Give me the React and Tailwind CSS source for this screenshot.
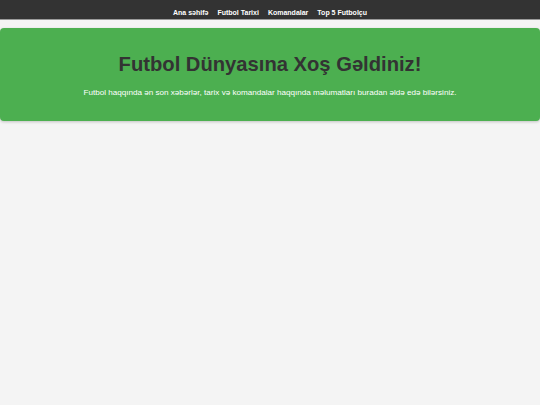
export default function App() {
  const links = ['Ana səhifə', 'Futbol Tarixi', 'Komandalar', 'Top 5 Futbolçu'];

  return (
    <div className="min-h-screen bg-[#f4f4f4]" style={{ fontFamily: '"Liberation Sans", Arial, sans-serif' }}>
      {/* Naviqasiya */}
      <nav className="h-[20px] bg-[#333333] border-b border-[#9a9a9a] flex items-center justify-center">
        <ul className="flex items-center gap-[9px] leading-none">
          {links.map((l) => (
            <li key={l}>
              <a href="#" className="text-white text-[7px] font-bold leading-none">
                {l}
              </a>
            </li>
          ))}
        </ul>
      </nav>

      {/* Başlıq */}
      <header className="mt-[8px] bg-[#4caf50] rounded-[4px] shadow-[0_1px_3px_rgba(0,0,0,0.2)] h-[93px] flex flex-col items-center pt-[22px]">
        <h1 className="text-[20.2px] font-bold text-[#333333] leading-[28px]">Futbol Dünyasına Xoş Gəldiniz!</h1>
        <p className="mt-[9px] text-[8.1px] text-white leading-[12px]">
          Futbol haqqında ən son xəbərlər, tarix və komandalar haqqında məlumatları buradan əldə edə bilərsiniz.
        </p>
      </header>
    </div>
  );
}
